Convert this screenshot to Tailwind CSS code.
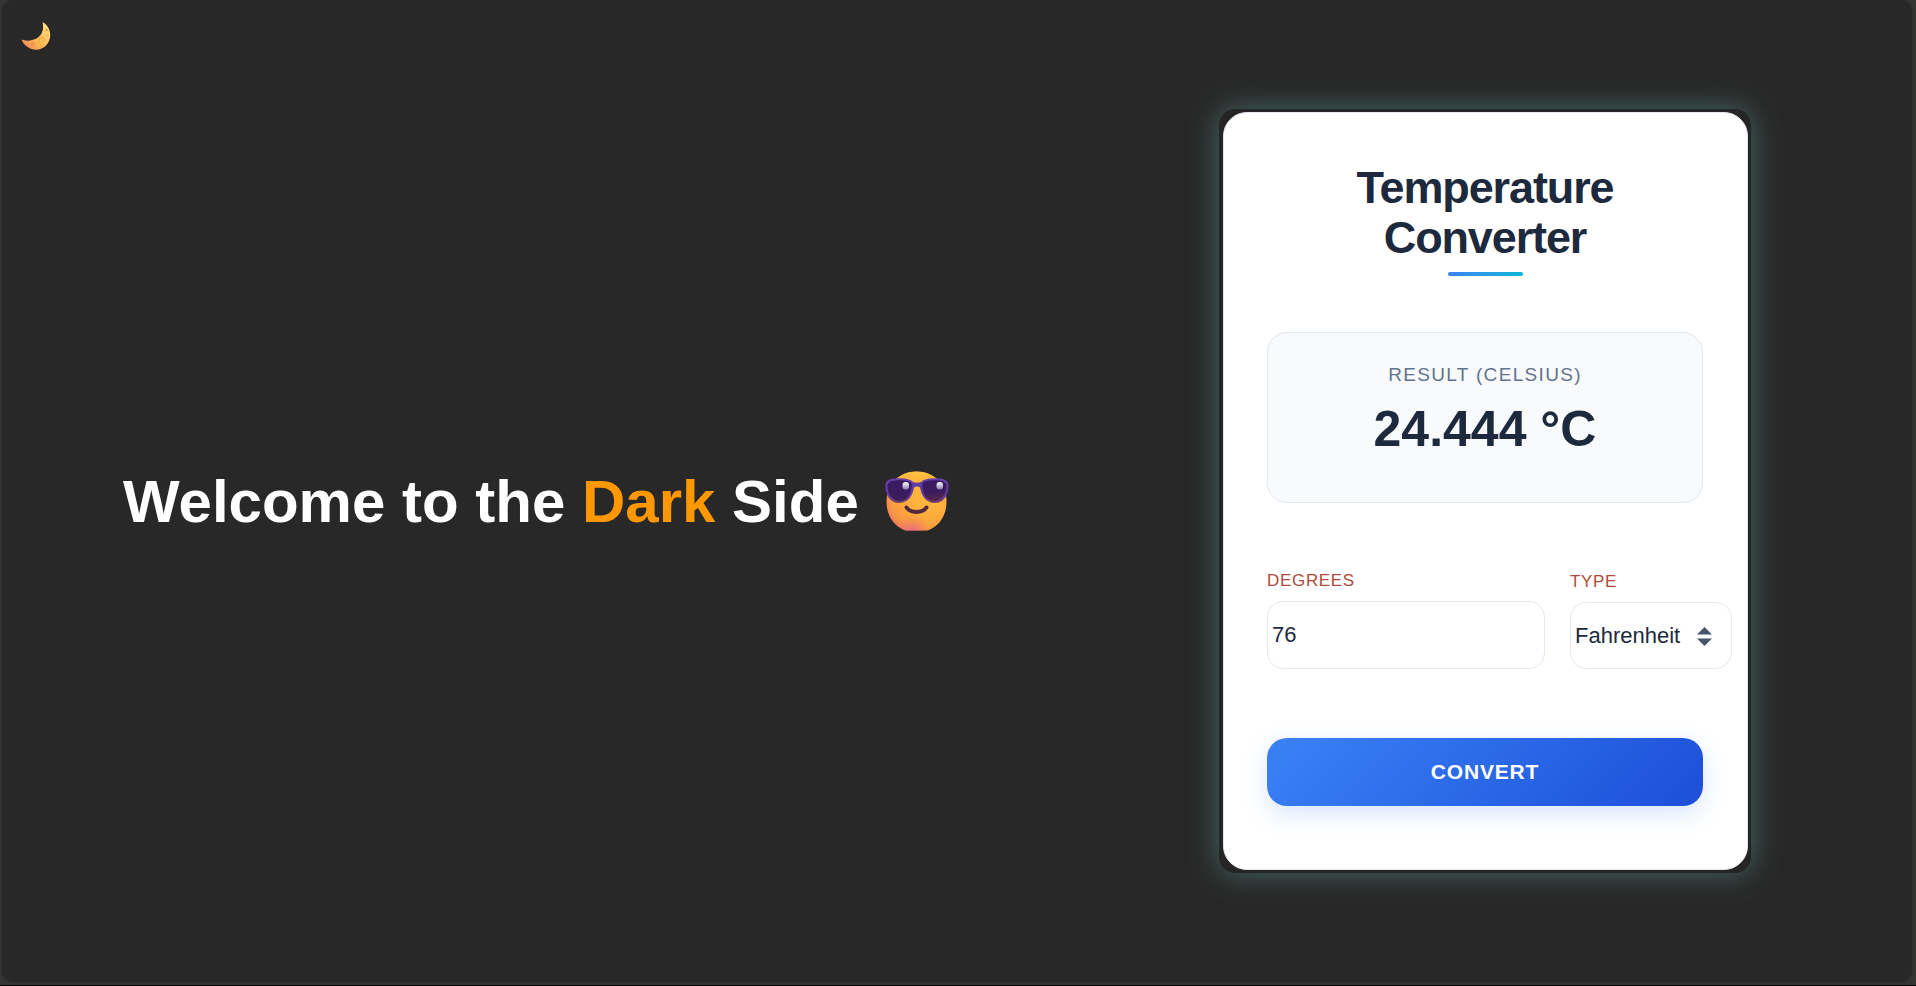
<!DOCTYPE html>
<html lang="en">
<head>
<meta charset="utf-8">
<title>Temperature Converter</title>
<script src="https://cdn.jsdelivr.net/npm/@tailwindcss/browser@4"></script>
</head>
<body class="flex min-h-screen flex-col border-b border-black bg-[#353534] pr-[4px] pb-[3px] pl-[2px] font-['Liberation_Sans',Arial,sans-serif]">
<div class="relative flex flex-1 items-center justify-between rounded-xl bg-[#282828] pr-[161px] pl-[121px] shadow-[0_0_3px_#282828]">
  <button type="button" aria-label="Toggle theme" class="absolute top-[21px] left-[19px] size-[30px]">
    <svg viewBox="0 0 30 30" class="size-[30px]" aria-hidden="true">
      <defs>
        <linearGradient id="moon" x1="0.1" y1="0.9" x2="0.9" y2="0.2"><stop offset="0" stop-color="#f0865a"/><stop offset="0.4" stop-color="#fcb452"/><stop offset="1" stop-color="#ffdc78"/></linearGradient>
      </defs>
      <path d="M22.3 1.400C26.500 4 29.200 8.800 29.200 14 29.200 22.300 23 28.700 15 28.700 9 28.700 3.500 25 .8 19.600 .5 18.900 1.100 18.600 1.800 18.800 7.500 20.600 13.500 19.500 17.800 15.800 21.800 12.300 22.800 7.300 21.700 2 21.600 1.400 21.900 1.100 22.300 1.400Z" fill="url(#moon)"/>
      <circle cx="20.500" cy="19" r="3.200" fill="#eda944"/><circle cx="21" cy="19.500" r="2.500" fill="#f8bd55"/>
      <circle cx="12" cy="23" r="1.700" fill="#dc8940"/><circle cx="12.400" cy="23.400" r="1.100" fill="#f4a650"/>
      <circle cx="25.500" cy="9" r="1.300" fill="#e0a045"/><circle cx="26.300" cy="14" r="1.100" fill="#edb04c"/>
    </svg>
  </button>

  <h1 class="mt-[22px] flex items-center text-[60px] leading-[68px] font-bold text-white">
    <span class="whitespace-nowrap">Welcome to the <span class="text-[#ff9800]">Dark</span> Side</span>
    <svg viewBox="0 0 64 60" class="mb-[3px] ml-[26px] h-[60px] w-[64px]" role="img" aria-label="Smiling face with sunglasses">
      <defs>
        <radialGradient id="face" cx="0.68" cy="0.4" r="0.75"><stop offset="0" stop-color="#ffbc3f"/><stop offset="0.5" stop-color="#ffac3b"/><stop offset="0.8" stop-color="#f99a42"/><stop offset="1" stop-color="#ee7360"/></radialGradient>
        <radialGradient id="chin" cx="0.42" cy="1.02" r="0.3"><stop offset="0" stop-color="#e2609c" stop-opacity="0.85"/><stop offset="1" stop-color="#f0765e" stop-opacity="0"/></radialGradient>
        <linearGradient id="topglow" x1="0" y1="0" x2="0" y2="1"><stop offset="0" stop-color="#ffd03f" stop-opacity="0.7"/><stop offset="0.3" stop-color="#ffc043" stop-opacity="0"/></linearGradient>
        <linearGradient id="lens" x1="0.2" y1="0" x2="0.7" y2="1"><stop offset="0" stop-color="#3a1a62"/><stop offset="0.7" stop-color="#3b1d5c"/><stop offset="1" stop-color="#57264f"/></linearGradient>
        <linearGradient id="frame" x1="0" y1="0" x2="0" y2="1"><stop offset="0" stop-color="#6540aa"/><stop offset="0.65" stop-color="#5c38a0"/><stop offset="1" stop-color="#784069"/></linearGradient>
        <linearGradient id="glint" x1="0" y1="0" x2="0" y2="1"><stop offset="0" stop-color="#fff"/><stop offset="1" stop-color="#8f7cb4"/></linearGradient>
        <clipPath id="faceclip"><path d="M1.500 31C1.500 13 14 .5 31.500 .5S61.500 13 61.500 31C61.500 44.500 54 55.500 42.500 59.500H20.500C9 55.500 1.500 44.500 1.500 31Z"/></clipPath>
      </defs>
      <g clip-path="url(#faceclip)">
        <rect width="64" height="60" fill="url(#face)"/><rect width="64" height="60" fill="url(#topglow)"/><rect width="64" height="60" fill="url(#chin)"/>
      </g>
      <path d="M.3 15.500C0 9.500 4 7.500 12 7.200 20 6.900 25.500 8 28 11 30.500 12 33.500 12 36 11 38.500 8 44 6.900 52 7.200 60 7.500 63.800 9.500 63.600 15.500 63.300 24.500 58 32 50 32 41.500 32 36.500 25.500 35 16.500 33.500 15 30.500 15 29 16.500 27.500 25.500 22.500 32 14 32 6 32 .6 24.500 .3 15.500Z" fill="url(#frame)"/>
      <path d="M2.600 15C2.600 11 6 9.500 13 9.300 22 9.100 27 10.500 26.800 14.500 26 23.500 22 30 14.500 30 7.500 30 2.600 23 2.600 15ZM61.400 15C61.400 11 58 9.500 51 9.300 42 9.100 37 10.500 37.200 14.500 38 23.500 42 30 49.500 30 56.500 30 61.400 23 61.400 15Z" fill="url(#lens)"/>
      <rect x="17.500" y="11" width="6.500" height="7.500" rx="3" fill="url(#glint)"/><rect x="51.500" y="11" width="6.500" height="7.500" rx="3" fill="url(#glint)"/>
      <path d="M21.500 36.500C25.500 42.500 37.500 42.500 41.500 36.500" fill="none" stroke="#522940" stroke-width="4" stroke-linecap="round"/>
    </svg>
  </h1>

  <div class="w-[532px] shrink-0 rounded-2xl bg-[#252525] py-[3px] pr-[3px] pl-[4px] shadow-[0_0_30px_#486965]">
    <form class="rounded-3xl border border-slate-200 bg-white pt-[50px] pr-[44px] pb-[63px] pl-[43px] text-center">
      <h2 class="px-[60px] text-[45px] leading-[50px] font-bold tracking-tight text-slate-800">Temperature Converter</h2>
      <div class="mx-auto mt-[9px] h-[4px] w-[75px] rounded-full bg-linear-to-r from-[#3b82f6] to-[#06b6d4]"></div>

      <section class="mt-14 rounded-[20px] border border-slate-200 bg-[#f8fafc] pt-[30px] pb-[43px]">
        <p class="text-[19px] leading-[24px] tracking-[0.07em] text-slate-500 uppercase">Result (Celsius)</p>
        <output for="degrees type" class="mt-3 block text-[50px] leading-[60px] font-bold text-slate-800">24.444 °C</output>
      </section>

      <div class="mt-[66px] -mr-[29px] flex items-end gap-[25px] text-left">
        <div class="min-w-0 flex-1">
          <label for="degrees" class="block text-[17px] leading-[24px] tracking-[0.04em] text-[#b04a3c] uppercase">Degrees</label>
          <input id="degrees" type="text" inputmode="decimal" value="76" class="mt-2 block h-[68px] w-full rounded-2xl border border-slate-200 bg-white px-[4px] text-[22px] text-slate-800">
        </div>
        <div class="w-[162px]">
          <label for="type" class="block text-[17px] leading-[24px] tracking-[0.04em] text-[#b04a3c] uppercase">Type</label>
          <div class="relative mt-2">
            <select id="type" class="block h-[67px] w-full appearance-none rounded-2xl border border-slate-200 bg-white px-[4px] text-[22px] text-slate-800">
              <option>Fahrenheit</option>
              <option>Celsius</option>
            </select>
            <svg viewBox="0 0 15 19" class="pointer-events-none absolute top-[25px] right-[20px] h-[19px] w-[15px] fill-slate-600" aria-hidden="true"><path d="M7.500 0 15 7.500H0ZM0 11.500H15L7.500 19Z"/></svg>
          </div>
        </div>
      </div>

      <button type="button" class="mt-[69px] block h-[68px] w-full rounded-[20px] bg-linear-135 from-[#3b82f6] to-[#1d4ed8] text-[21px] leading-[24px] font-bold tracking-[0.04em] text-white uppercase shadow-[0_8px_24px_rgba(59,130,246,0.2)]">Convert</button>
    </form>
  </div>
</div>
</body>
</html>
